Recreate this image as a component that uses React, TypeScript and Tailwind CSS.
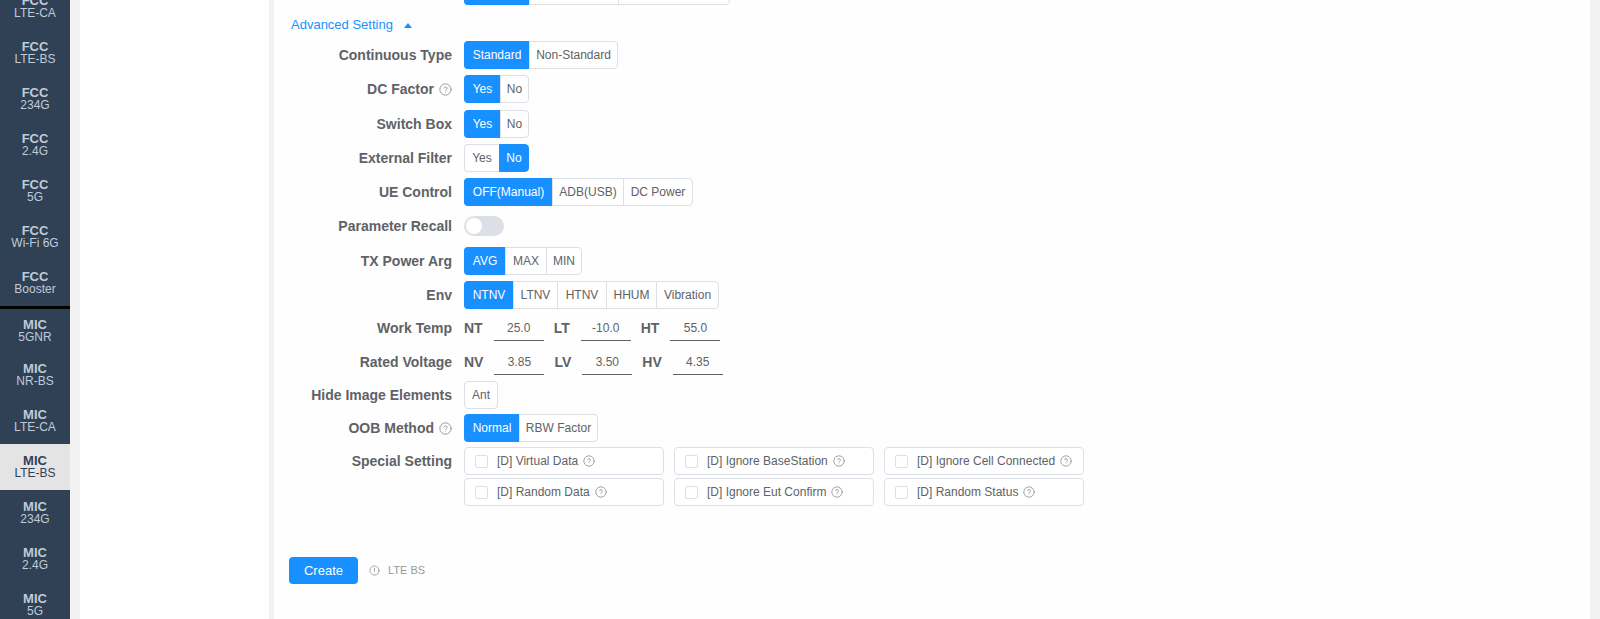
import React from "react";

type NavItem = { top: string; sub: string; active?: boolean; short?: boolean };

const fccItems: NavItem[] = [
  { top: "FCC", sub: "LTE-CA" },
  { top: "FCC", sub: "LTE-BS" },
  { top: "FCC", sub: "234G" },
  { top: "FCC", sub: "2.4G" },
  { top: "FCC", sub: "5G" },
  { top: "FCC", sub: "Wi-Fi 6G" },
  { top: "FCC", sub: "Booster" },
];

const micItems: NavItem[] = [
  { top: "MIC", sub: "5GNR", short: true },
  { top: "MIC", sub: "NR-BS" },
  { top: "MIC", sub: "LTE-CA" },
  { top: "MIC", sub: "LTE-BS", active: true },
  { top: "MIC", sub: "234G" },
  { top: "MIC", sub: "2.4G" },
  { top: "MIC", sub: "5G" },
];

function NavEntry({ item }: { item: NavItem }) {
  return (
    <div
      className={`flex flex-col items-center justify-center text-center ${
        item.short ? "h-[43px]" : "h-[46px]"
      } ${item.active ? "bg-[#e4e4e4] text-[#304156]" : "text-[#bfcbd9]"}`}
    >
      <div className="text-[13px] font-bold leading-[13px]">{item.top}</div>
      <div className="text-[12px] leading-[13px]">{item.sub}</div>
    </div>
  );
}

function HelpIcon({ className }: { className?: string }) {
  return (
    <svg
      viewBox="0 0 24 24"
      className={className}
      fill="none"
      stroke="currentColor"
      strokeWidth={1.7}
      strokeLinecap="round"
    >
      <circle cx="12" cy="12" r="10.4" />
      <path d="M9.2 9.4a2.9 2.9 0 0 1 5.7 0.8c0 1.9-2.9 2.3-2.9 4.3" />
      <circle cx="12" cy="17.7" r="0.8" fill="currentColor" stroke="none" />
    </svg>
  );
}

function InfoIcon({ className }: { className?: string }) {
  return (
    <svg
      viewBox="0 0 24 24"
      className={className}
      fill="none"
      stroke="currentColor"
      strokeWidth={2}
      strokeLinecap="round"
    >
      <circle cx="12" cy="12" r="10" />
      <path d="M12 6.8v6.6" />
      <circle cx="12" cy="17" r="0.9" fill="currentColor" stroke="none" />
    </svg>
  );
}

type Seg = { label: string; w: string };

function Segmented({ items, active }: { items: Seg[]; active: number }) {
  return (
    <div className="flex h-[28px]">
      {items.map((s, i) => {
        const first = i === 0;
        const last = i === items.length - 1;
        const on = i === active;
        return (
          <div
            key={s.label}
            className={`${s.w} h-[28px] flex items-center justify-center text-[12px] whitespace-nowrap border-y border-l ${
              last ? "border-r" : ""
            } ${first ? "rounded-l-[4px]" : ""} ${last ? "rounded-r-[4px]" : ""} ${
              on
                ? "bg-[#1890ff] border-[#1890ff] text-white"
                : "bg-white border-[#dcdfe6] text-[#606266]"
            }`}
          >
            {s.label}
          </div>
        );
      })}
    </div>
  );
}

function Row({
  label,
  help,
  className = "",
  children,
}: {
  label: string;
  help?: boolean;
  className?: string;
  children: React.ReactNode;
}) {
  return (
    <div className={`flex items-center h-[28px] ${className}`}>
      <div className="w-[175px] pr-[12px] flex justify-end items-center text-[14px] font-bold text-[#606266] whitespace-nowrap">
        <span>{label}</span>
        {help && <HelpIcon className="ml-[5px] w-[13px] h-[13px] text-[#909399]" />}
      </div>
      <div className="flex items-center">{children}</div>
    </div>
  );
}

function Field({ tag, value }: { tag: string; value: string }) {
  return (
    <>
      <span className="text-[14px] font-bold text-[#606266]">{tag}</span>
      <input
        readOnly
        value={value}
        className="ml-[11px] mr-[10px] w-[50px] h-[26px] border-b border-[#606266] bg-transparent text-center text-[12px] text-[#606266] outline-none"
      />
    </>
  );
}

const specials = [
  "[D] Virtual Data",
  "[D] Ignore BaseStation",
  "[D] Ignore Cell Connected",
  "[D] Random Data",
  "[D] Ignore Eut Confirm",
  "[D] Random Status",
];

export default function App() {
  return (
    <div
      className="flex h-screen w-full overflow-hidden bg-[#f2f2f2]"
      style={{ fontFamily: '"Liberation Sans", Arial, sans-serif' }}
    >
      {/* side navigation, scrolled slightly */}
      <aside className="w-[70px] shrink-0 bg-[#304156] overflow-hidden">
        <div className="-mt-[16px]">
          {fccItems.map((it) => (
            <NavEntry key={it.top + it.sub} item={it} />
          ))}
          <div className="h-[3px] bg-black" />
          {micItems.map((it) => (
            <NavEntry key={it.top + it.sub} item={it} />
          ))}
        </div>
      </aside>

      <div className="flex flex-1 pl-[10px] pr-[10px] gap-[5px]">
        <div className="w-[189px] shrink-0 bg-white" />

        <main className="flex-1 bg-[#fefefe] pl-[15px] overflow-hidden">
          <div className="-mt-[23px] flex flex-col">
            <Row label="Test Mode">
              <Segmented
                active={0}
                items={[
                  { label: "Standard", w: "w-[65px]" },
                  { label: "Non-Standard", w: "w-[89px]" },
                  { label: "Customized Test", w: "w-[112px]" },
                ]}
              />
            </Row>

            <div className="mt-[10px] h-[20px] pl-[2px] flex items-center text-[13px] text-[#1890ff]">
              <span>Advanced Setting</span>
              <svg viewBox="0 0 8 5" className="ml-[11px] w-[8px] h-[5px]" fill="#1890ff">
                <path d="M0 5 L4 0 L8 5 Z" />
              </svg>
            </div>

            <Row label="Continuous Type" className="mt-[6px]">
              <Segmented
                active={0}
                items={[
                  { label: "Standard", w: "w-[65px]" },
                  { label: "Non-Standard", w: "w-[89px]" },
                ]}
              />
            </Row>

            <Row label="DC Factor" help className="mt-[6px]">
              <Segmented
                active={0}
                items={[
                  { label: "Yes", w: "w-[36px]" },
                  { label: "No", w: "w-[29px]" },
                ]}
              />
            </Row>

            <Row label="Switch Box" className="mt-[7px]">
              <Segmented
                active={0}
                items={[
                  { label: "Yes", w: "w-[36px]" },
                  { label: "No", w: "w-[29px]" },
                ]}
              />
            </Row>

            <Row label="External Filter" className="mt-[6px]">
              <Segmented
                active={1}
                items={[
                  { label: "Yes", w: "w-[35px]" },
                  { label: "No", w: "w-[30px]" },
                ]}
              />
            </Row>

            <Row label="UE Control" className="mt-[6px]">
              <Segmented
                active={0}
                items={[
                  { label: "OFF(Manual)", w: "w-[88px]" },
                  { label: "ADB(USB)", w: "w-[71px]" },
                  { label: "DC Power", w: "w-[70px]" },
                ]}
              />
            </Row>

            <Row label="Parameter Recall" className="mt-[6px]">
              <div className="relative w-[40px] h-[20px] rounded-full bg-[#dcdfe6]">
                <div className="absolute left-[2px] top-[2px] w-[16px] h-[16px] rounded-full bg-white" />
              </div>
            </Row>

            <Row label="TX Power Arg" className="mt-[7px]">
              <Segmented
                active={0}
                items={[
                  { label: "AVG", w: "w-[41px]" },
                  { label: "MAX", w: "w-[41px]" },
                  { label: "MIN", w: "w-[36px]" },
                ]}
              />
            </Row>

            <Row label="Env" className="mt-[6px]">
              <Segmented
                active={0}
                items={[
                  { label: "NTNV", w: "w-[49px]" },
                  { label: "LTNV", w: "w-[44px]" },
                  { label: "HTNV", w: "w-[49px]" },
                  { label: "HHUM", w: "w-[50px]" },
                  { label: "Vibration", w: "w-[63px]" },
                ]}
              />
            </Row>

            <Row label="Work Temp" className="mt-[5px]">
              <Field tag="NT" value="25.0" />
              <Field tag="LT" value="-10.0" />
              <Field tag="HT" value="55.0" />
            </Row>

            <Row label="Rated Voltage" className="mt-[6px]">
              <Field tag="NV" value="3.85" />
              <Field tag="LV" value="3.50" />
              <Field tag="HV" value="4.35" />
            </Row>

            <Row label="Hide Image Elements" className="mt-[5px]">
              <Segmented active={-1} items={[{ label: "Ant", w: "w-[34px]" }]} />
            </Row>

            <Row label="OOB Method" help className="mt-[5px]">
              <Segmented
                active={0}
                items={[
                  { label: "Normal", w: "w-[55px]" },
                  { label: "RBW Factor", w: "w-[79px]" },
                ]}
              />
            </Row>

            <div className="mt-[5px] flex items-start">
              <div className="w-[175px] h-[28px] pr-[12px] flex justify-end items-center text-[14px] font-bold text-[#606266]">
                Special Setting
              </div>
              <div className="grid grid-cols-[200px_200px_200px] gap-x-[10px] gap-y-[3px]">
                {specials.map((s) => (
                  <label
                    key={s}
                    className="h-[28px] border border-[#dcdfe6] rounded-[4px] bg-white flex items-center pl-[10px]"
                  >
                    <span className="w-[13px] h-[13px] border border-[#dcdfe6] rounded-[2px] bg-white" />
                    <span className="ml-[9px] text-[12px] text-[#606266] whitespace-nowrap">{s}</span>
                    <HelpIcon className="ml-[5px] w-[12px] h-[12px] text-[#909399]" />
                  </label>
                ))}
              </div>
            </div>

            <div className="mt-[51px] flex items-center">
              <button className="w-[69px] h-[27px] rounded-[4px] bg-[#1890ff] text-white text-[13px]">
                Create
              </button>
              <InfoIcon className="ml-[11px] w-[11px] h-[11px] text-[#a0a0a0]" />
              <span className="ml-[8px] text-[11px] text-[#999999]">LTE BS</span>
            </div>
          </div>
        </main>
      </div>
    </div>
  );
}
